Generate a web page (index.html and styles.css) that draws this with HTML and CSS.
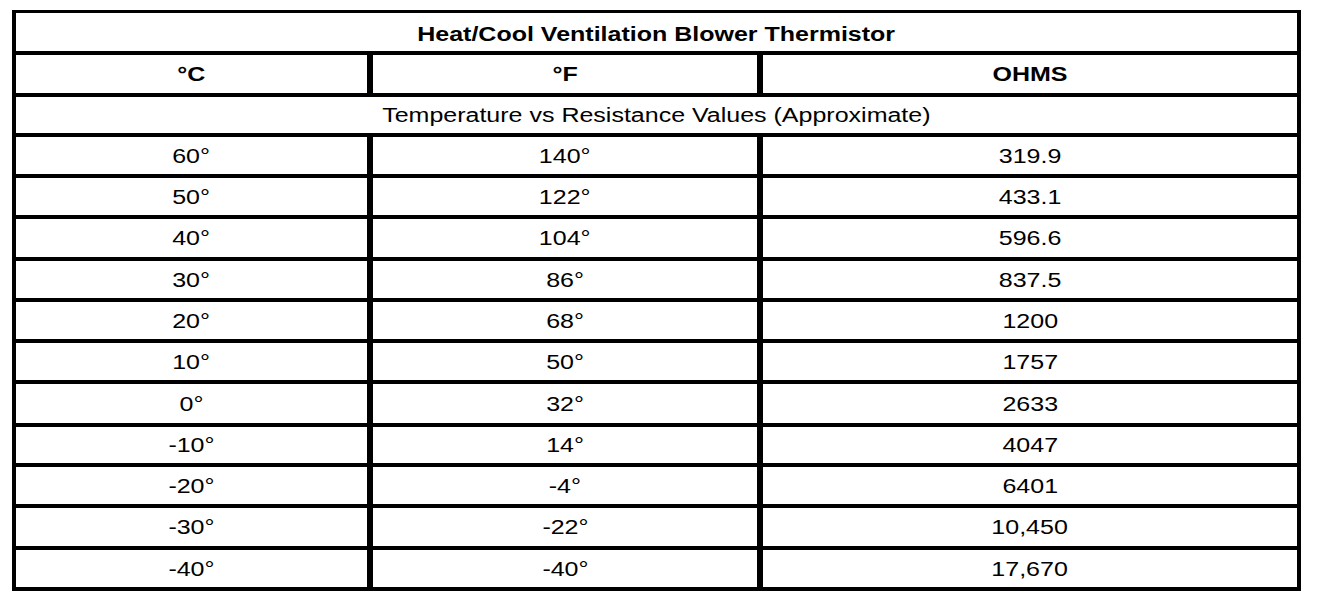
FILE: index.html
```html
<!DOCTYPE html>
<html lang="en">

<head>
  <meta charset="UTF-8">
  <meta name="viewport" content="width=device-width, initial-scale=1.0">
  <title>Heat/Cool Ventilation Blower Thermistor</title>
  <link rel="stylesheet" href="styles.css">
</head>

<body>
  <div id="container">
    <div class="chart">
      <div class="cell cell--wide cell--bold cell--title"><span>Heat/Cool Ventilation Blower Thermistor</span></div>

      <div class="cell cell--bold"><span>°C</span></div>
      <div class="cell cell--bold"><span>°F</span></div>
      <div class="cell cell--bold"><span>OHMS</span></div>

      <div class="cell cell--wide"><span>Temperature vs Resistance Values (Approximate)</span></div>

      <div class="cell"><span>60°</span></div>
      <div class="cell"><span>140°</span></div>
      <div class="cell"><span>319.9</span></div>

      <div class="cell"><span>50°</span></div>
      <div class="cell"><span>122°</span></div>
      <div class="cell"><span>433.1</span></div>

      <div class="cell"><span>40°</span></div>
      <div class="cell"><span>104°</span></div>
      <div class="cell"><span>596.6</span></div>

      <div class="cell"><span>30°</span></div>
      <div class="cell"><span>86°</span></div>
      <div class="cell"><span>837.5</span></div>

      <div class="cell"><span>20°</span></div>
      <div class="cell"><span>68°</span></div>
      <div class="cell"><span>1200</span></div>

      <div class="cell"><span>10°</span></div>
      <div class="cell"><span>50°</span></div>
      <div class="cell"><span>1757</span></div>

      <div class="cell"><span>0°</span></div>
      <div class="cell"><span>32°</span></div>
      <div class="cell"><span>2633</span></div>

      <div class="cell"><span>-10°</span></div>
      <div class="cell"><span>14°</span></div>
      <div class="cell"><span>4047</span></div>

      <div class="cell"><span>-20°</span></div>
      <div class="cell"><span>-4°</span></div>
      <div class="cell"><span>6401</span></div>

      <div class="cell"><span>-30°</span></div>
      <div class="cell"><span>-22°</span></div>
      <div class="cell"><span>10,450</span></div>

      <div class="cell"><span>-40°</span></div>
      <div class="cell"><span>-40°</span></div>
      <div class="cell"><span>17,670</span></div>
    </div>
  </div>
</body>

</html>
```

FILE: styles.css
```css
html,
body {
  margin: 0;
  background: #fff;
}

body {
  font-family: "Liberation Sans", Arial, sans-serif;
  font-size: 20px;
  color: #000;
}

#container {
  padding: 10px 0 0 12px;
}

/* black background shows through the gaps as the rule lines */
#container .chart {
  display: inline-grid;
  grid-template-columns: 351px 384px 534px;
  grid-template-rows: 38px 38px 36px 37px 37px 38px 37px 37px 37px 39px 36px 37px 38px 37px;
  column-gap: 6px;
  row-gap: 4px;
  padding: 3px 4px 4px;
  background: #000;
}

#container .chart .cell {
  display: flex;
  align-items: center;
  justify-content: center;
  background: #fff;
  line-height: 1;
}

#container .chart .cell span {
  display: inline-block;
  transform: scaleX(1.25);
  white-space: nowrap;
}

#container .chart .cell--wide {
  grid-column: 1 / -1;
}

#container .chart .cell--title {
  padding-top: 3px;
}

#container .chart .cell--bold {
  font-weight: bold;
}
```
